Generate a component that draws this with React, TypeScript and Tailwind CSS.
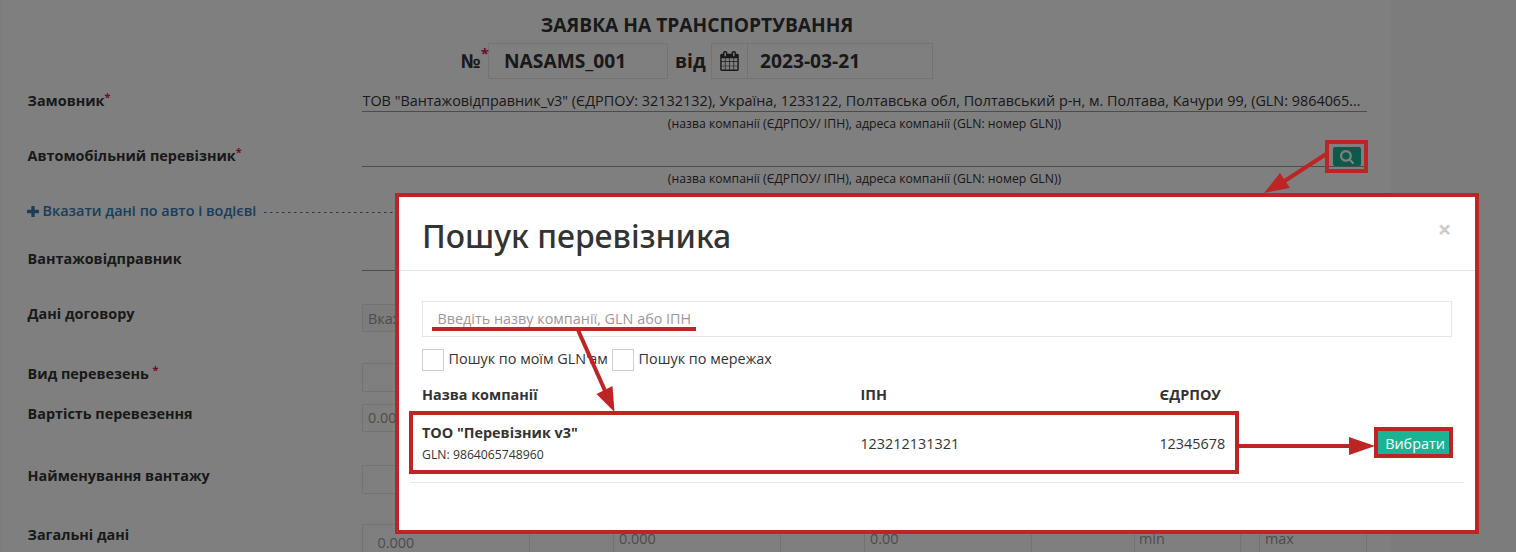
import type { ReactNode } from "react";

const Star = ({ className = "-top-[5px] text-[11px]" }: { className?: string }) => (
  <span className={`relative text-[#e8143c] ${className}`}>*</span>
);

const Row = ({ label, height, children }: { label: ReactNode; height: string; children?: ReactNode }) => (
  <div className={`flex shrink-0 items-start ${height}`}>
    <div className="w-[335px] shrink-0 pl-[0.6px] font-bold leading-5">{label}</div>
    {children}
  </div>
);

const Company = ({ value }: { value: string }) => (
  <div className="w-[1005px]">
    <div className="h-[21px] truncate border-b border-[#999] pl-[0.5px] leading-5">{value}</div>
    <div className="pt-[3px] text-center text-[12.24px] leading-[18px]">(назва компанії (ЄДРПОУ/ ІПН), адреса компанії (GLN: номер GLN))</div>
  </div>
);

const SearchIcon = () => (
  <svg viewBox="0 128 1664 1664" className="size-[14px] fill-white">
    <path d="M1152 832q0-185-131.5-316.5t-316.5-131.5-316.5 131.5-131.5 316.5 131.5 316.5 316.5 131.5 316.5-131.5 131.5-316.5zm512 832q0 52-38 90t-90 38q-54 0-90-38l-343-342q-179 124-399 124-143 0-273.5-55.5t-225-150-150-225-55.5-273.5 55.5-273.5 150-225 225-150 273.5-55.5 273.5 55.5 225 150 150 225 55.5 273.5q0 220-124 399l343 343q37 37 37 90z" />
  </svg>
);

const CalendarIcon = () => (
  <svg viewBox="0 0 1664 1792" className="h-5 w-[19px] fill-[#333]">
    <path d="M128 1664h288v-288h-288v288zm352 0h320v-288h-320v288zm-352-352h288v-320h-288v320zm352 0h320v-320h-320v320zm-352-384h288v-288h-288v288zm736 736h320v-288h-320v288zm-384-736h320v-288h-320v288zm768 736h288v-288h-288v288zm-384-352h320v-320h-320v320zm-352-864v-288q0-13-9.5-22.5t-22.5-9.5h-64q-13 0-22.5 9.5t-9.5 22.5v288q0 13 9.5 22.5t22.5 9.5h64q13 0 22.5-9.5t9.5-22.5zm736 864h288v-320h-288v320zm-384-384h320v-288h-320v288zm384 0h288v-288h-288v288zm32-480v-288q0-13-9.5-22.5t-22.5-9.5h-64q-13 0-22.5 9.5t-9.5 22.5v288q0 13 9.5 22.5t22.5 9.5h64q13 0 22.5-9.5t9.5-22.5zm384-64v1280q0 52-38 90t-90 38h-1408q-52 0-90-38t-38-90v-1280q0-52 38-90t90-38h128v-96q0-66 47-113t113-47h64q66 0 113 47t47 113v96h384v-96q0-66 47-113t113-47h64q66 0 113 47t47 113v96h128q52 0 90 38t38 90z" />
  </svg>
);

const PlusIcon = () => (
  <svg viewBox="0 256 1408 1280" className="h-[11px] w-3 fill-[#337ab7]">
    <path d="M1408 800v192q0 40-28 68t-68 28h-416v416q0 40-28 68t-68 28h-192q-40 0-68-28t-28-68v-416h-416q-40 0-68-28t-28-68v-192q0-40 28-68t68-28h416v-416q0-40 28-68t68-28h192q40 0 68 28t28 68v416h416q40 0 68 28t28 68z" />
  </svg>
);

const cell = "h-10 shrink-0 border border-[#e5e6e7] text-[#999]";

function RequestForm() {
  return (
    <div className="ml-[3px] flex h-[552px] w-[1388px] flex-col overflow-hidden bg-white pl-6">
      <h1 className="-ml-6 mt-[11px] h-8 shrink-0 text-center text-[19.2px] font-bold leading-7">ЗАЯВКА НА ТРАНСПОРТУВАННЯ</h1>
      <div className="ml-[434px] flex h-9 shrink-0 items-center text-[19.2px] font-bold">
        <span className="flex w-[27px]">№<Star className="-top-[8px] text-[15px]" /></span>
        <div className="flex h-9 w-[180px] items-center rounded-[1px] border border-[#e5e6e7] pl-[15px]">NASAMS_001</div>
        <span className="w-[43px] pl-[7px]">від</span>
        <div className="flex h-9 w-[222px] items-center border border-[#e5e6e7]">
          <div className="flex h-full w-9 items-center justify-center border-r border-[#e5e6e7]"><CalendarIcon /></div>
          <span className="pl-3">2023-03-21</span>
        </div>
      </div>
      <div className="h-3 shrink-0" />
      <Row height="h-[55px]" label={<>Замовник<Star /></>}>
        <Company value={'ТОВ "Вантажовідправник_v3" (ЄДРПОУ: 32132132), Україна, 1233122, Полтавська обл, Полтавський р-н, м. Полтава, Качури 99, (GLN: 9864065748960)'} />
      </Row>
      <Row height="h-[55px]" label={<>Автомобільний перевізник<Star /></>}>
        <Company value="" />
        <button className="-ml-[34px] mt-px flex h-[19px] w-7 items-center justify-center rounded-[2px] bg-[#1ab394]"><SearchIcon /></button>
      </Row>
      <div className="flex h-12 shrink-0 items-start font-semibold leading-5 text-[#337ab7]">
        <span className="flex h-5 items-center gap-[3.6px]"><PlusIcon />Вказати дані по авто і водієві</span>
        <span className="ml-2 mt-[11px] h-px w-40 bg-[repeating-linear-gradient(90deg,#337ab7_0_2px,#99bcdb_2px_3px,transparent_3px_6px)]" />
      </div>
      <Row height="h-[55px]" label="Вантажовідправник"><div className="h-[22px] w-[1005px] border-b border-[#999]" /></Row>
      <Row height="h-[59px]" label="Дані договору">
        <div className="h-7 w-[400px] rounded-[1px] border border-[#e5e6e7] bg-[#f8f8f8] pl-[5px] pt-1 leading-5 text-[#999]">Вкажіть</div>
      </Row>
      <Row height="h-[41px]" label={<span className="relative top-px">Вид перевезень <Star /></span>}>
        <div className="h-[29px] w-[400px] rounded-[1px] border border-[#e5e6e7]" />
      </Row>
      <Row height="h-[61px]" label="Вартість перевезення">
        <div className="h-7 w-[400px] rounded-[1px] border border-[#e5e6e7] pl-[5px] pt-[3px] leading-5 text-[#999]">0.00</div>
      </Row>
      <Row height="h-[59px]" label={<span className="relative top-px">Найменування вантажу</span>}>
        <div className="h-[29px] w-[400px] rounded-[1px] border border-[#e5e6e7]" />
      </Row>
      <Row height="h-10" label={<span className="relative top-px">Загальні дані</span>}>
        <div className={`${cell} w-[168px] pl-[14.5px] pt-2`}>0.000</div>
        <div className={`${cell} ml-[83px] w-[168px] pl-[5px] pt-1`}>0.000</div>
        <div className={`${cell} ml-[83px] w-[168px] pl-[5px] pt-1`}>0.00</div>
        <div className={`${cell} ml-[102px] w-[107px] pl-1 pt-1`}>min</div>
        <div className={`${cell} ml-[18px] w-[108px] pl-[5px] pt-1`}>max</div>
      </Row>
    </div>
  );
}

const columns = "grid grid-cols-[438.4px_299px_1fr]";

function SearchDialog() {
  return (
    <div className="absolute left-[395px] top-[193px] flex h-[341px] w-[1084px] flex-col border-4 border-[#bf2424] bg-white">
      <div className="flex h-[74px] shrink-0 items-center justify-between border-b border-[#e5e5e5] pl-[23px] pr-[23.500px]">
        <h2 className="pt-[5px] font-['Noto_Sans',sans-serif] text-[32px] font-medium leading-9">Пошук перевізника</h2>
        <button className="pb-[9px] text-[24px] font-bold leading-5 text-[#ccc]">×</button>
      </div>
      <div className="mx-[23px] mt-[30px] flex h-9 shrink-0 items-center border border-[#e5e6e7] pl-[14.4px] text-[#999]">Введіть назву компанії, GLN або ІПН</div>
      <div className="ml-[23px] mt-3 flex h-[22px] shrink-0 items-center">
        <span className="size-[22px] border border-[#d2cec8]" />
        <span className="w-[168px] pb-[3px] pl-[4.5px] leading-5">Пошук по моїм GLN'ам</span>
        <span className="size-[22px] border border-[#d2cec8]" />
        <span className="pb-[3px] pl-[4.5px] leading-5">Пошук по мережах</span>
      </div>
      <div className={`${columns} ml-[23px] mt-[14px] h-[26px] shrink-0 font-bold leading-5`}>
        <span>Назва компанії</span><span>ІПН</span><span>ЄДРПОУ</span>
      </div>
      <div className="ml-[11px] mr-[11px] flex h-[72px] shrink-0 border-b border-[#e7eaec]">
        <div className={`${columns} -ml-px h-[63px] w-[830px] items-center border-4 border-[#bf2424] pl-[9px]`}>
          <div>
            <div className="font-bold leading-5">ТОО "Перевізник v3"</div>
            <div className="relative top-px pt-[2px] text-[12.24px] leading-[18px]">GLN: 9864065748960</div>
          </div>
          <span className="pt-[2px]">123212131321</span>
          <span className="pt-[2px]">12345678</span>
        </div>
        <button className="ml-[135px] mt-4 flex h-[31px] w-[79px] items-center justify-center border-4 border-[#bf2424] bg-[#1ab394] pl-[3px] pt-[2px] leading-5 text-white">Вибрати</button>
      </div>
    </div>
  );
}

function Annotations() {
  return (
    <svg viewBox="0 0 1516 552" className="pointer-events-none absolute inset-0 h-[552px] w-[1516px] fill-[#bf2424] stroke-[#bf2424]">
      <rect x="1327" y="142" width="39" height="29" fill="none" strokeWidth="4" />
      <path d="M1327 153.500L1283 182" strokeWidth="4" />
      <path d="M1264 193l16-20 10 15z" stroke="none" />
      <path d="M432 329h264" strokeWidth="4" />
      <path d="M578 330l28 63" strokeWidth="4" />
      <path d="M614.500 412l-18-18 16-8z" stroke="none" />
      <path d="M1238 446h114" strokeWidth="4" />
      <path d="M1375 446l-26-9v18z" stroke="none" />
    </svg>
  );
}

export default function App() {
  return (
    <div className="relative h-[552px] w-[1516px] overflow-hidden bg-[#f8f8f8] font-['Open_Sans','Noto_Sans',sans-serif] text-[14.4px] leading-5 text-[#333]">
      <RequestForm />
      <div className="absolute inset-0 bg-black/50" />
      <SearchDialog />
      <Annotations />
    </div>
  );
}
